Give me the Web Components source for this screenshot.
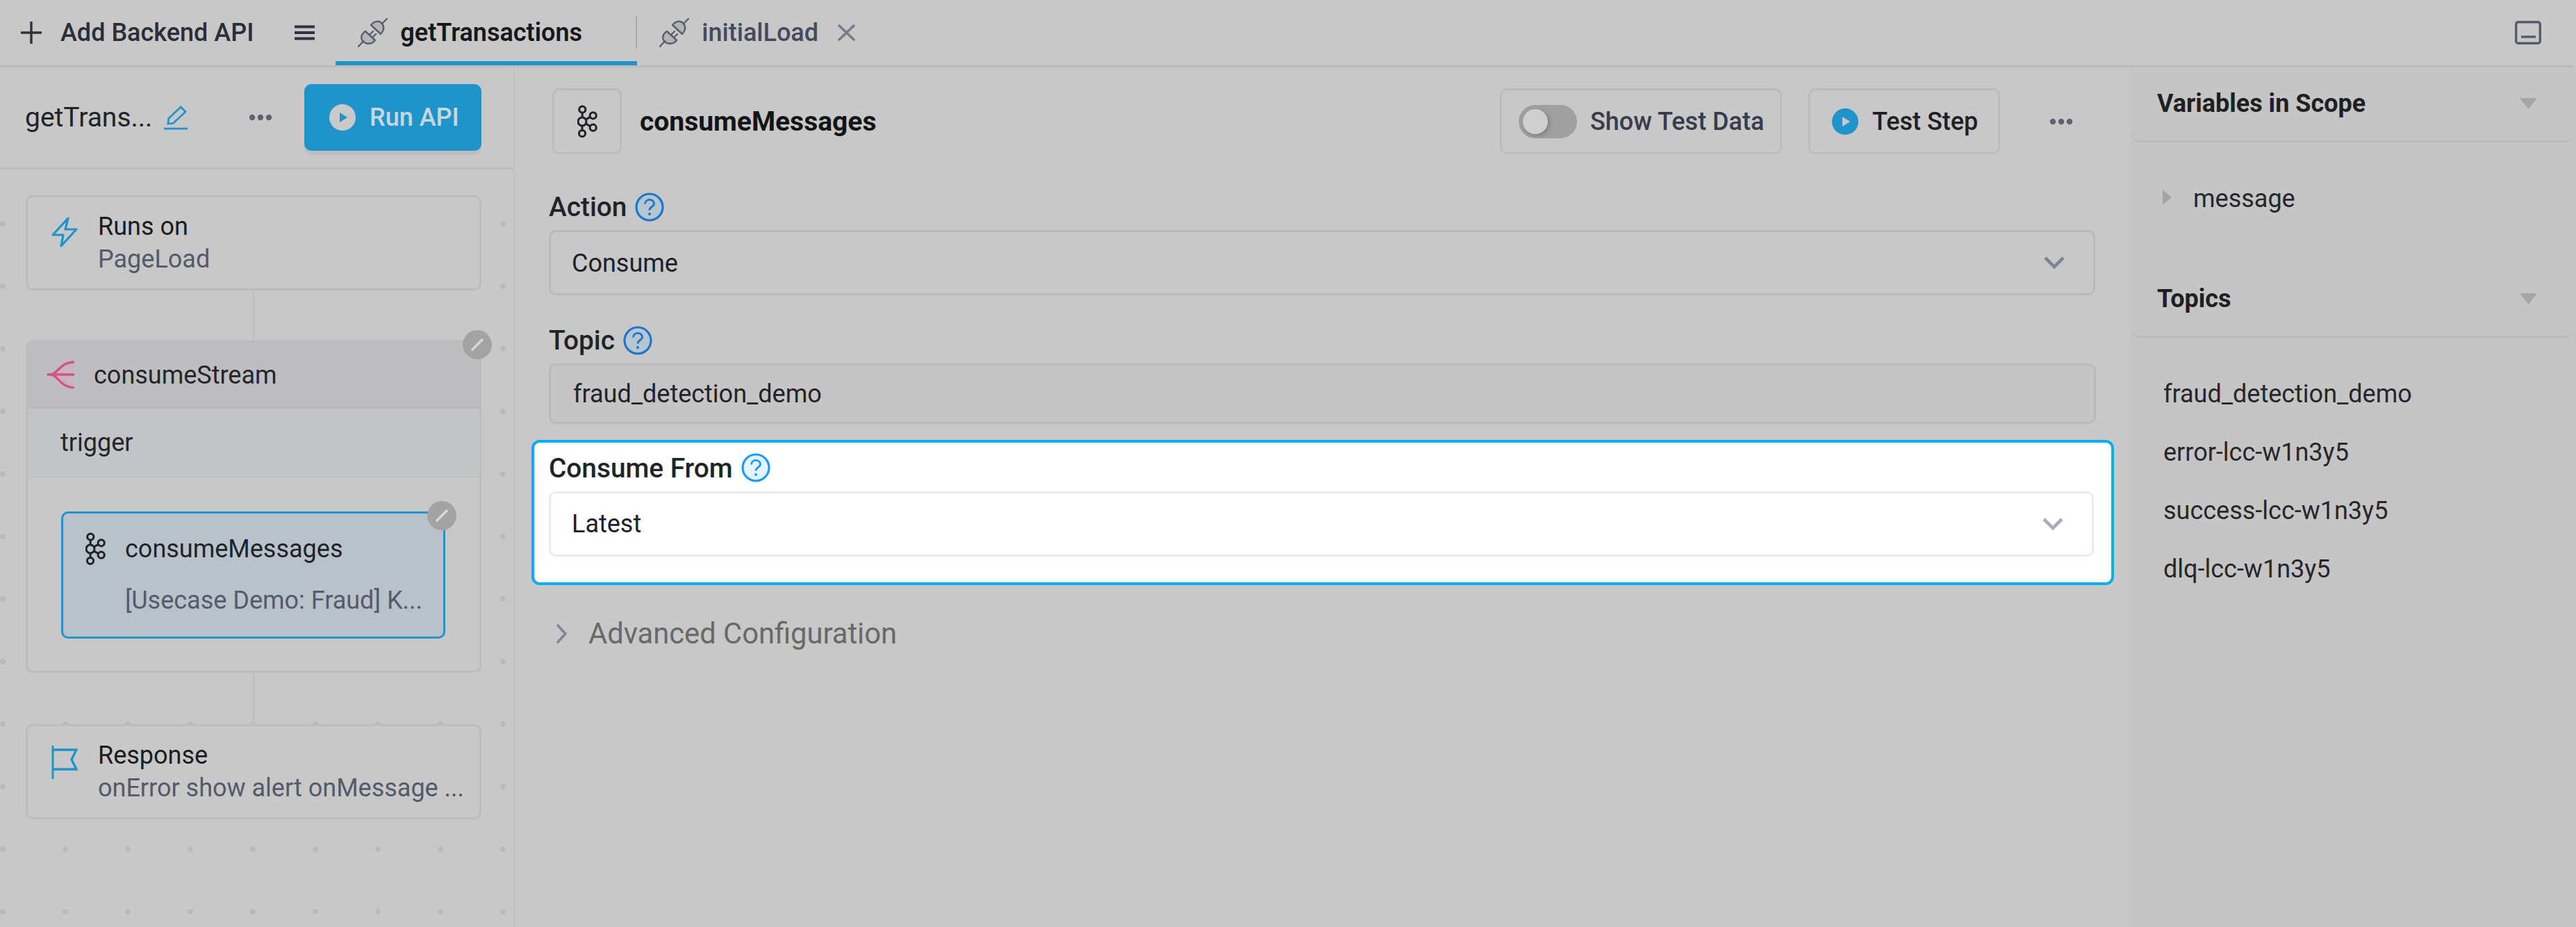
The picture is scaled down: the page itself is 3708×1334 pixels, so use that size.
<!doctype html>
<html lang="en">
<head>
<meta charset="utf-8">
<title>getTransactions</title>
<style>
  html, body { margin: 0; height: 100%; }
  body { width: 3708px; height: 1334px; overflow: hidden; background: #c8c8c8; font-family: Roboto, "Liberation Sans", sans-serif; font-size: 36px; color: #1f2022; }
</style>
</head>
<body>
<editor-page></editor-page>

<script>
// Icons are plain svg strings, keyed by name
const ICONS = {
  plus: '<svg width="30" height="32" viewBox="0 0 30 32"><path d="M15 0V32M0 16H30" stroke="#2f3340" stroke-width="3.4"/></svg>',
  menu: '<svg width="29" height="22" viewBox="0 0 29 22"><path d="M0 2.5H29M0 11H29M0 19.5H29" stroke="#2f3340" stroke-width="4"/></svg>',
  plug: '<svg width="43" height="42" viewBox="10 10 43 42"><g stroke="#5a5f6e" stroke-width="2.4" fill="#b5b5b5" stroke-linecap="round" stroke-linejoin="round"><path d="M21 29L35 42C30 48 22 48 18 44C13 39 15 33 21 29Z"/><path d="M29 20L43 33C47 29 49 23 45 18C41 13 34 14 29 20Z"/><path d="M18 43L11 51M45 18L52 11M27 34L32 29M31 38L36 33" fill="none"/></g></svg>',
  close: '<svg width="27" height="24" viewBox="0 0 27 24"><path d="M2 1L25 23M25 1L2 23" stroke="#777c8d" stroke-width="3.6"/></svg>',
  panel: '<svg width="38" height="34" viewBox="0 0 38 34"><rect x="1.7" y="1.7" width="34.6" height="30.6" rx="3" fill="none" stroke="#555b6c" stroke-width="3.4"/><path d="M9 23H30" stroke="#555b6c" stroke-width="3.4"/></svg>',
  pen: '<svg width="35" height="36" viewBox="11 8 36 37"><g fill="none" stroke="#1f94cb" stroke-width="2.8"><path d="M18 36L19 28L37 11L44 18L26 35Z"/><path d="M12 43H47"/></g></svg>',
  dots: '<svg width="34" height="10" viewBox="0 0 34 10"><g fill="#5d6273"><circle cx="5" cy="5" r="4.2"/><circle cx="17" cy="5" r="4.2"/><circle cx="29" cy="5" r="4.2"/></g></svg>',
  playlight: '<svg width="38" height="38" viewBox="0 0 38 38"><circle cx="19" cy="19" r="19" fill="#c9c9c9"/><path d="M15 12L26 19L15 26Z" fill="#1f94cb"/></svg>',
  playblue: '<svg width="38" height="38" viewBox="0 0 38 38"><circle cx="19" cy="19" r="19" fill="#1f94cb"/><path d="M15 12L26 19L15 26Z" fill="#c9c9c9"/></svg>',
  bolt: '<svg width="38" height="44" viewBox="0 0 38 44"><path d="M24 2L2 26H17L14 42L36 18H20Z" fill="none" stroke="#1f94cb" stroke-width="3.2" stroke-linejoin="round"/></svg>',
  flag: '<svg width="38" height="48" viewBox="0 0 38 48"><path d="M2 0V48" stroke="#1f94cb" stroke-width="3"/><path d="M2 6H36L29 20L36 34H2" fill="none" stroke="#1f94cb" stroke-width="3.4"/></svg>',
  stream: '<svg width="40" height="40" viewBox="6 9 40 40"><path d="M14 29C22 29 24 12 45 11V48C24 46 22 29 14 29Z" fill="#c9b3be"/><g fill="none" stroke="#d4528e" stroke-width="3.6" stroke-linecap="round"><path d="M8 29H45"/><path d="M12 29C22 29 24 12 45 11"/><path d="M12 29C22 29 24 46 45 48"/></g></svg>',
  kafka: '<svg width="29" height="47" viewBox="8 9 29 47"><g fill="none" stroke="#202124" stroke-width="3"><circle cx="15.3" cy="15.5" r="4.6"/><circle cx="15" cy="33" r="6"/><circle cx="15" cy="50" r="4.6"/><circle cx="30.7" cy="24.3" r="4.6"/><circle cx="30.7" cy="41.7" r="4.6"/><path d="M15.2 20V27M15 39V45.4M20.2 30L26.6 26.4M20.2 36L26.6 39.6"/></g></svg>',
  chevron: '<svg width="30" height="18" viewBox="0 0 30 18"><path d="M2 2L15 15L28 2" fill="none" stroke="var(--chevron, #7e8494)" stroke-width="4.6"/></svg>',
  chevronright: '<svg width="16" height="30" viewBox="0 0 16 30"><path d="M2 2L14 15L2 28" fill="none" stroke="#7e8494" stroke-width="3.4"/></svg>',
  caretdown: '<svg width="25" height="16" viewBox="0 0 25 16"><path d="M0 0H25L12.5 16Z" fill="#a5a5a5"/></svg>',
  caretright: '<svg width="13" height="22" viewBox="0 0 13 22"><path d="M0 0L13 11L0 22Z" fill="#a5a5a5"/></svg>'
};

// Helper: every element gets an open shadow root filled from its html
class ShadowElement extends HTMLElement {
  connectedCallback() {
    if (this.shadowRoot) return;
    this.attachShadow({ mode: 'open' });
    this.shadowRoot.innerHTML = this.render();
  }
  render() { return ''; }
  attr(name, fallback = '') { return this.getAttribute(name) ?? fallback; }
}

class UiIcon extends ShadowElement {
  render() {
    return `<style>:host { display: inline-flex; flex-shrink: 0; } svg { display: block; }</style>${ICONS[this.attr('name')] || ''}`;
  }
}

class HelpIcon extends ShadowElement {
  render() {
    const lit = this.hasAttribute('lit');
    const ring = lit ? '#1a9bf5' : '#1a75cc';
    const fill = lit ? '#e3f4fe' : '#b5c6d0';
    return `<style>:host { display: inline-flex; flex-shrink: 0; } svg { display: block; }</style>
      <svg width="42" height="42" viewBox="0 0 42 42"><circle cx="21" cy="21" r="19" fill="${fill}" stroke="${ring}" stroke-width="3.2"/>
      <path d="M14.5 16.5C14.5 8.5 27.5 8.5 27.5 16C27.5 20.5 21 20.5 21 25.5" fill="none" stroke="${ring}" stroke-width="2.8"/><circle cx="21" cy="31" r="2" fill="${ring}"/></svg>`;
  }
}

class TopBar extends ShadowElement {
  render() {
    return `<style>
      :host { display: flex; align-items: stretch; height: 97px; box-sizing: border-box; border-bottom: 3px solid #bcbcbc; width: 3704px; font-weight: 500; }
      .add { display: flex; align-items: center; gap: 27px; padding-left: 30px; color: #2b2e38; }
      .menu { display: flex; align-items: center; margin-left: 59px; margin-right: 30px; }
      .right { display: flex; align-items: center; margin-left: auto; padding-right: 46px; }
    </style>
    <div class="add"><ui-icon name="plus"></ui-icon>Add Backend API</div>
    <div class="menu"><ui-icon name="menu"></ui-icon></div>
    <api-tab active>getTransactions</api-tab>
    <api-tab closable>initialLoad</api-tab>
    <div class="right"><ui-icon name="panel"></ui-icon></div>`;
  }
}

class ApiTab extends ShadowElement {
  render() {
    const active = this.hasAttribute('active');
    const closable = this.hasAttribute('closable');
    return `<style>
      :host { display: flex; align-items: center; position: relative; gap: 18px; box-sizing: border-box; height: 94px; padding-left: ${active ? 32 : 32}px; ${active ? 'width:434px; border-bottom: 6px solid #1f94cb; padding-top: 6px; font-weight: 600; color: #17181a;' : 'color: #454a5c;'} }
      .divider { position: absolute; right: 0; top: 22px; height: 48px; width: 2.4px; background: #a9a9a9; }
      .x { margin-left: 9px; display: flex; }
    </style>
    <ui-icon name="plug"></ui-icon><slot></slot>
    ${closable ? '<span class="x"><ui-icon name="close"></ui-icon></span>' : ''}
    ${active ? '<span class="divider"></span>' : ''}`;
  }
}

class FlowPanel extends ShadowElement {
  render() {
    return `<style>
      :host { display: flex; flex-direction: column; width: 741px; box-sizing: border-box; border-right: 2.4px solid #c2c2c2; flex-shrink: 0; }
      header { display: flex; align-items: center; height: 147px; box-sizing: border-box; border-bottom: 3px solid #bcbcbc; padding-left: 36px; color: #232427; }
      .name { margin-right: 16px; font-size: 39px; }
      .more { display: flex; margin-left: auto; margin-right: 46px; }
      .canvas { flex: 1; display: flex; flex-direction: column; align-items: center; padding: 37px 46px 0 37px;
        background-image: radial-gradient(circle, #b9b9b9 3.6px, transparent 4.2px); background-size: 90px 90px; background-position: -41px 33px; }
      .line { width: 2.4px; background: #bcbcbc; flex-shrink: 0; }
    </style>
    <header>
      <span class="name">getTrans...</span><ui-icon name="pen"></ui-icon>
      <span class="more"><ui-icon name="dots"></ui-icon></span>
      <run-button></run-button>
    </header>
    <div class="canvas">
      <flow-card icon="bolt" title="Runs on" sub="PageLoad"></flow-card>
      <div class="line" style="height:72px"></div>
      <stream-card></stream-card>
      <div class="line" style="height:74px"></div>
      <flow-card icon="flag" title="Response" sub="onError show alert onMessage ..."></flow-card>
    </div>`;
  }
}

class RunButton extends ShadowElement {
  render() {
    return `<style>
      :host { display: flex; align-items: center; gap: 20px; box-sizing: border-box; width: 255px; height: 96px; margin-right: 46px; padding-left: 36px; border-radius: 10px; background: #1f94cb; color: #c9d6dd; font-weight: 500; box-shadow: 0 6px 0 #bebebe; flex-shrink: 0; }
    </style><ui-icon name="playlight"></ui-icon>Run API`;
  }
}

class FlowCard extends ShadowElement {
  render() {
    return `<style>
      :host { display: flex; gap: 29px; width: 656px; height: 137px; box-sizing: border-box; border: 3px solid #bcbcbe; border-radius: 10px; padding: 19px 0 0 34px; background: #c8c8c8; line-height: 47px; flex-shrink: 0; }
      ui-icon { margin-top: 9px; }
      .title { color: #1c1c1e; }
      .sub { color: #555a6b; white-space: nowrap; }
    </style>
    <ui-icon name="${this.attr('icon')}"></ui-icon>
    <div><div class="title">${this.attr('title')}</div><div class="sub">${this.attr('sub')}</div></div>`;
  }
}

class EditBadge extends ShadowElement {
  render() {
    return `<style>
      :host { position: absolute; top: -18px; right: -18px; width: 42px; height: 42px; border-radius: 50%; background: #a3a3a3; display: flex; align-items: center; justify-content: center; }
      svg { display: block; }
    </style><svg width="18" height="18" viewBox="0 0 18 18"><path d="M2 16L16 2" stroke="#d9d9d9" stroke-width="3.4" stroke-linecap="round"/></svg>`;
  }
}

class StreamCard extends ShadowElement {
  render() {
    return `<style>
      :host { display: block; position: relative; width: 656px; box-sizing: border-box; border: 3px solid #bcbcbe; border-radius: 10px; background: #c8c8c8; line-height: 47px; flex-shrink: 0; }
      .head { display: flex; align-items: center; gap: 28px; height: 95px; box-sizing: border-box; padding: 2px 0 0 27px; background: #bebec0; border-bottom: 3px solid #b8b8ba; border-radius: 7px 7px 0 0; color: #24262a; }
      .head ui-icon { margin-top: -2px; }
      .trigger { display: flex; align-items: center; height: 99px; box-sizing: border-box; padding: 2px 0 0 47px; background: #c3c4c5; border-bottom: 2px solid #bfc0c1; color: #24262a; }
      .body { padding: 49px 49px 46px 48px; }
    </style>
    <edit-badge></edit-badge>
    <div class="head"><ui-icon name="stream"></ui-icon>consumeStream</div>
    <div class="trigger">trigger</div>
    <div class="body"><step-card></step-card></div>`;
  }
}

class StepCard extends ShadowElement {
  render() {
    return `<style>
      :host { display: block; position: relative; height: 183px; box-sizing: border-box; border: 3px solid #1f94cf; border-radius: 10px; background: #b9c2ca; padding: 28px 0 0 32px; line-height: 47px; }
      .row { display: flex; align-items: center; gap: 28px; color: #212427; }
      .row ui-icon { margin-top: -2px; }
      .sub { margin: 27px 0 0 57px; color: #555b6c; white-space: nowrap; }
      edit-badge { top: -18px; right: -19px; }
    </style>
    <edit-badge></edit-badge>
    <div class="row"><ui-icon name="kafka"></ui-icon>consumeMessages</div>
    <div class="sub">[Usecase Demo: Fraud] K...</div>`;
  }
}

class StepHeader extends ShadowElement {
  render() {
    return `<style>
      :host { display: flex; align-items: center; height: 95px; padding-left: 5px; margin-top: 30px; padding-right: 33px; }
      .iconbox { display: flex; align-items: center; justify-content: center; width: 100px; height: 95px; box-sizing: border-box; border: 3px solid #bcbcbc; border-radius: 10px; }
      .title { margin-left: 26px; font-weight: 700; font-size: 39px; color: #131416; }
      .btn { display: flex; align-items: center; height: 95px; box-sizing: border-box; border: 3px solid #bcbcbc; border-radius: 10px; font-weight: 500; }
      .toggle-btn { margin-left: auto; width: 406px; padding-left: 24px; gap: 19px; color: #383c4d; }
      .toggle { position: relative; width: 84px; height: 48px; border-radius: 24px; background: #a0a0a0; flex-shrink: 0; }
      .toggle::after { content: ""; position: absolute; left: 6px; top: 6px; width: 36px; height: 36px; border-radius: 50%; background: #cfcfcf; box-shadow: 2px 2px 6px rgba(0,0,0,.25); }
      .test-btn { margin-left: 38px; width: 276px; padding-left: 31px; gap: 20px; color: #1f2022; }
      .more { display: flex; margin-left: 71px; }
    </style>
    <div class="iconbox"><ui-icon name="kafka"></ui-icon></div>
    <div class="title">consumeMessages</div>
    <div class="btn toggle-btn"><span class="toggle"></span>Show Test Data</div>
    <div class="btn test-btn"><ui-icon name="playblue"></ui-icon>Test Step</div>
    <div class="more"><ui-icon name="dots"></ui-icon></div>`;
  }
}

class FieldLabel extends ShadowElement {
  render() {
    return `<style>
      :host { display: flex; align-items: center; gap: 12px; height: 47px; font-size: 38.8px; font-weight: 500; color: #222326; margin-bottom: 10px; }
    </style><slot></slot><help-icon ${this.hasAttribute('lit') ? 'lit' : ''}></help-icon>`;
  }
}

class SelectBox extends ShadowElement {
  render() {
    return `<style>
      :host { display: flex; align-items: center; justify-content: space-between; height: 94px; box-sizing: border-box; border: 3px solid var(--field-border, #bababa); border-radius: 10px; padding: 0 41px 0 30px; margin-right: 1px; color: #1d2026; }
      .value { padding-top: 1px; }
    </style><span class="value"><slot></slot></span><ui-icon name="chevron"></ui-icon>`;
  }
}

class TextBox extends ShadowElement {
  render() {
    return `<style>
      :host { display: flex; align-items: center; height: 87px; box-sizing: border-box; border: 3px solid #bababa; border-radius: 10px; padding-left: 32px; background: #c5c5c5; color: #232427; }
    </style><slot></slot>`;
  }
}

class FocusBox extends ShadowElement {
  render() {
    return `<style>
      :host { display: block; margin: 23px -26px 0 -25px; padding: 12.5px 24px 37px 21px; border: 4px solid #00aeef; border-radius: 12px; background: #fff; --field-border: #ebebee; --chevron: #a9adb9; }
    </style><slot></slot>`;
  }
}

class AdvancedRow extends ShadowElement {
  render() {
    return `<style>
      :host { display: flex; align-items: center; gap: 31px; height: 54px; margin: 43px 0 0 10px; font-size: 41.7px; color: #696969; }
    </style><ui-icon name="chevronright"></ui-icon><slot></slot>`;
  }
}

class ConfigPanel extends ShadowElement {
  render() {
    return `<style>
      :host { display: block; flex: 1; min-width: 0; padding: 0 50px 0 49px; }
      .action { margin-top: 52px; }
      .topic { margin-top: 41px; }
    </style>
    <step-header></step-header>
    <div class="action"><field-label>Action</field-label><select-box>Consume</select-box></div>
    <div class="topic"><field-label>Topic</field-label><text-box>fraud_detection_demo</text-box></div>
    <focus-box><field-label lit>Consume From</field-label><select-box>Latest</select-box></focus-box>
    <advanced-row>Advanced Configuration</advanced-row>`;
  }
}

class SideSection extends ShadowElement {
  render() {
    return `<style>
      :host { display: flex; align-items: center; justify-content: space-between; height: 108px; box-sizing: border-box; border-bottom: 3px solid #bababa; border-radius: 0 0 10px 10px; padding: 0 52px 2px 36px; font-weight: 700; color: #1f2022; }
      .text { padding-top: 2px; }
    </style><span class="text"><slot></slot></span><ui-icon name="caretdown"></ui-icon>`;
  }
}

class SidePanel extends ShadowElement {
  render() {
    return `<style>
      :host { display: block; width: 641px; box-sizing: border-box; border-left: 2.4px solid #c2c2c2; padding-right: 4px; background: #c5c5c5; flex-shrink: 0; line-height: 47px; color: #26272a; }
      .vars { display: flex; align-items: center; gap: 31px; padding: 57.5px 0 68.5px 44px; }
      .vars ui-icon { margin-top: -4px; }
      .list { display: flex; flex-direction: column; gap: 37px; padding: 57.5px 0 0 45px; }
    </style>
    <side-section>Variables in Scope</side-section>
    <div class="vars"><ui-icon name="caretright"></ui-icon>message</div>
    <side-section>Topics</side-section>
    <div class="list">
      <div>fraud_detection_demo</div>
      <div>error-lcc-w1n3y5</div>
      <div>success-lcc-w1n3y5</div>
      <div>dlq-lcc-w1n3y5</div>
    </div>`;
  }
}

class EditorPage extends ShadowElement {
  render() {
    return `<style>
      :host { display: flex; flex-direction: column; width: 3708px; height: 1334px; }
      main { display: flex; flex: 1; min-height: 0; width: 3708px; }
    </style>
    <top-bar></top-bar>
    <main><flow-panel></flow-panel><config-panel></config-panel><side-panel></side-panel></main>`;
  }
}

customElements.define('ui-icon', UiIcon);
customElements.define('help-icon', HelpIcon);
customElements.define('api-tab', ApiTab);
customElements.define('top-bar', TopBar);
customElements.define('run-button', RunButton);
customElements.define('flow-card', FlowCard);
customElements.define('edit-badge', EditBadge);
customElements.define('step-card', StepCard);
customElements.define('stream-card', StreamCard);
customElements.define('flow-panel', FlowPanel);
customElements.define('step-header', StepHeader);
customElements.define('field-label', FieldLabel);
customElements.define('select-box', SelectBox);
customElements.define('text-box', TextBox);
customElements.define('focus-box', FocusBox);
customElements.define('advanced-row', AdvancedRow);
customElements.define('config-panel', ConfigPanel);
customElements.define('side-section', SideSection);
customElements.define('side-panel', SidePanel);
customElements.define('editor-page', EditorPage);
</script>
</body>
</html>
